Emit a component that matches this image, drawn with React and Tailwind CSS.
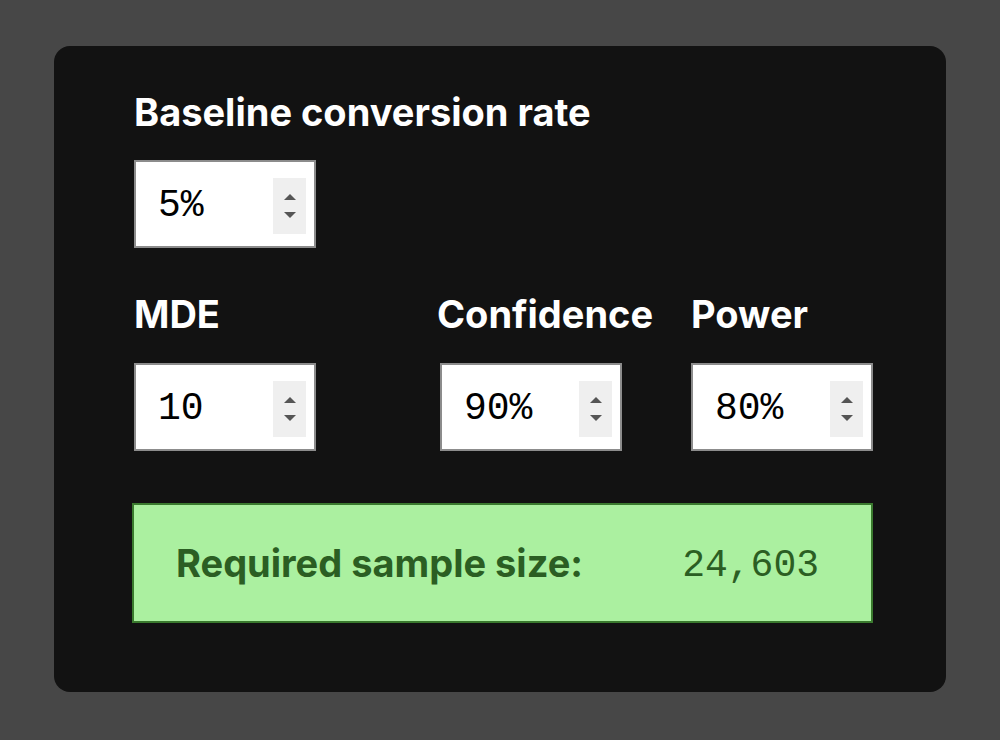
import React from "react";

const inter = { fontFamily: "Inter, 'Noto Sans', sans-serif" };
const mono = { fontFamily: "'Liberation Mono', 'DejaVu Sans Mono', monospace" };

function Spinner() {
  return (
    <div className="flex h-[56px] w-[33px] flex-col items-center justify-center gap-[12px] bg-[#efefef]">
      <div className="h-0 w-0 border-x-[6px] border-b-[6px] border-x-transparent border-b-[#555555]" />
      <div className="h-0 w-0 border-x-[6px] border-t-[6px] border-x-transparent border-t-[#555555]" />
    </div>
  );
}

function NumBox({ value }) {
  return (
    <div className="flex h-[88px] w-[182px] items-center justify-between border-2 border-[#8c8c8c] bg-white pl-[22px] pr-[8px]">
      <span className="mt-[4px] text-[38px] leading-none text-black" style={mono}>
        {value}
      </span>
      <div className="mt-[4px]">
        <Spinner />
      </div>
    </div>
  );
}

function Label({ children }) {
  return (
    <div className="text-[38px] font-bold leading-[44px] text-white whitespace-nowrap" style={inter}>
      {children}
    </div>
  );
}

export default function App() {
  return (
    <div className="flex h-[740px] w-[1000px] justify-center bg-[#474747] pt-[46px]">
      <div className="flex h-[646px] w-[892px] flex-col rounded-[16px] bg-[#121212] pl-[80px] pt-[44px]">
        <Label>Baseline conversion rate</Label>
        <div className="mt-[26px]">
          <NumBox value="5%" />
        </div>
        <div className="mt-[44px] flex">
          <div className="flex w-[306px] flex-col gap-[27px]">
            <Label>MDE</Label>
            <NumBox value="10" />
          </div>
          <div className="flex w-[251px] flex-col gap-[27px]">
            <div className="-ml-[3px]">
              <Label>Confidence</Label>
            </div>
            <NumBox value="90%" />
          </div>
          <div className="flex w-[182px] flex-col gap-[27px]">
            <Label>Power</Label>
            <NumBox value="80%" />
          </div>
        </div>
        <div className="-ml-[2px] mt-[52px] flex h-[120px] w-[741px] items-center justify-between border-2 border-[#3a7a2e] bg-[#abf0a0] pl-[42px] pr-[52px]">
          <span className="text-[38px] font-bold leading-none text-[#2b5e23]" style={inter}>
            Required sample size:
          </span>
          <span className="mt-[6px] text-[38px] leading-none text-[#2b5e23]" style={mono}>
            24,603
          </span>
        </div>
      </div>
    </div>
  );
}
